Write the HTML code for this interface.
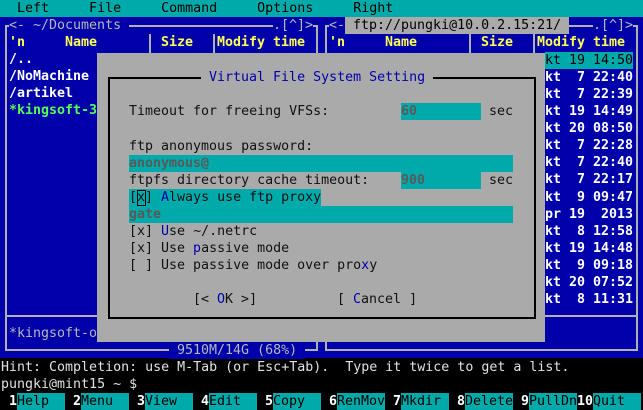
<!DOCTYPE html>
<html><head><meta charset="utf-8"><style>
html,body{margin:0;width:643px;height:410px;overflow:hidden}
body{background:#000;position:relative;font-family:"DejaVu Sans Mono","Liberation Mono",monospace;font-size:13.3px}
div{position:absolute}
.t{white-space:pre;height:17px;line-height:17px}
.b{font-weight:bold}
.bg{background:#0000aa}
.hl{background:#00aaaa}
.ln{background:#b0b0b0}
.y{color:#ffff55}
.w{color:#fff}
.g{color:#b8b8b8}
.bl{color:#0000aa}
.dim{color:#5a5a5a;font-weight:bold}
.fk{color:#000;background:#00aaaa;width:48px}
</style></head><body>
<!-- menu -->
<div style="left:0;top:0;width:643px;height:17px;background:#00aaaa"></div>
<div class="t" style="left:1px;top:0;color:#000">  Left     File     Command     Options     Right</div>
<!-- panels bg -->
<div class="bg" style="left:0;top:17px;width:643px;height:341px"></div>
<!-- left panel frame -->
<div class="ln" style="left:5px;top:25px;width:2px;height:326px"></div>
<div class="ln" style="left:5px;top:25px;width:312px;height:2px"></div>
<div class="ln" style="left:316px;top:25px;width:2px;height:326px"></div>
<div class="ln" style="left:5px;top:349px;width:312px;height:2px"></div>
<div class="ln" style="left:5px;top:315px;width:312px;height:2px"></div>
<div class="ln" style="left:149px;top:34px;width:2px;height:273px"></div>
<div class="ln" style="left:213px;top:34px;width:2px;height:273px"></div>
<!-- right panel frame -->
<div class="ln" style="left:325px;top:25px;width:2px;height:326px"></div>
<div class="ln" style="left:325px;top:25px;width:312px;height:2px"></div>
<div class="ln" style="left:636px;top:25px;width:2px;height:326px"></div>
<div class="ln" style="left:325px;top:349px;width:312px;height:2px"></div>
<div class="ln" style="left:325px;top:315px;width:312px;height:2px"></div>
<div class="ln" style="left:469px;top:34px;width:2px;height:273px"></div>
<div class="ln" style="left:533px;top:34px;width:2px;height:273px"></div>
<!-- titles -->
<div class="t g bg" style="left:9px;top:17px">&lt;- ~/Documents </div>
<div class="t g bg" style="left:273px;top:17px">.[^]&gt;</div>
<div class="t g bg" style="left:329px;top:17px">&lt;-</div>
<div class="t" style="left:345px;top:17px;background:#aaaaaa;color:#000"> ftp://pungki@10.0.2.15:21/ </div>
<div class="t g bg" style="left:593px;top:17px">.[^]&gt;</div>
<!-- headers -->
<div class="t b y" style="left:9px;top:34px">'n</div>
<div class="t b y" style="left:65px;top:34px">Name</div>
<div class="t b y" style="left:161px;top:34px">Size</div>
<div class="t b y bg" style="left:217px;top:34px">Modify time</div>
<div class="t b y" style="left:329px;top:34px">'n</div>
<div class="t b y" style="left:385px;top:34px">Name</div>
<div class="t b y" style="left:481px;top:34px">Size</div>
<div class="t b y bg" style="left:537px;top:34px">Modify time</div>
<!-- left files -->
<div class="t b w" style="left:9px;top:51px">/..</div>
<div class="t b w" style="left:9px;top:68px">/NoMachine</div>
<div class="t b w" style="left:9px;top:85px">/artikel</div>
<div class="t b" style="left:9px;top:102px;color:#55ff55">*kingsoft-3</div>
<div class="t g" style="left:9px;top:325px">*kingsoft-o</div>
<div class="t g bg" style="left:169px;top:342px"> 9510M/14G (68%) </div>
<!-- right dates -->
<div class="t hl" style="left:545px;top:52px;width:88px;color:#000">kt 19 14:50</div>
<div class="t b w" style="left:545px;top:69px;height:240px;line-height:17.08px">kt  7 22:40
kt  7 22:39
kt 19 14:49
kt 20 08:50
kt  7 22:28
kt  7 22:40
kt  7 22:17
kt  9 09:47
pr 19  2013
kt  8 12:58
kt 19 14:48
kt  9 09:18
kt 20 07:52
kt  8 11:31</div>
<!-- dialog -->
<div style="left:97px;top:53px;width:448px;height:289px;background:#aaaaaa"></div>
<div style="left:108px;top:77px;width:424px;height:238px;border:2px solid #000"></div>
<div class="t bl" style="left:201px;top:69px;background:#aaaaaa"> Virtual File System Setting </div>
<div class="t" style="left:129px;top:103px;color:#111">Timeout for freeing VFSs:</div>
<div class="t hl dim" style="left:401px;top:103px;width:80px">60</div>
<div class="t" style="left:489px;top:103px;color:#111">sec</div>
<div class="t" style="left:129px;top:138px;color:#111">ftp anonymous password:</div>
<div class="t hl dim" style="left:129px;top:155px;width:384px">anonymous@</div>
<div class="t" style="left:129px;top:172px;color:#111">ftpfs directory cache timeout:</div>
<div class="t hl dim" style="left:401px;top:172px;width:80px">900</div>
<div class="t" style="left:489px;top:172px;color:#111">sec</div>
<div class="t hl" style="left:129px;top:189px;width:192px;color:#111">[x] <span class="bl">A</span>lways use ftp proxy</div>
<div style="left:137px;top:190px;width:7px;height:14px;border:1px solid #000"></div>
<div class="t hl dim" style="left:129px;top:206px;width:384px">gate</div>
<div class="t" style="left:129px;top:223px;color:#111">[x] <span class="bl">U</span>se ~/.netrc</div>
<div class="t" style="left:129px;top:240px;color:#111">[x] Use <span class="bl">p</span>assive mode</div>
<div class="t" style="left:129px;top:257px;color:#111">[ ] Use passive mode over pro<span class="bl">x</span>y</div>
<div class="t" style="left:193px;top:291px;color:#111">[&lt; <span class="bl">O</span>K &gt;]</div>
<div class="t" style="left:337px;top:291px;color:#111">[ <span class="bl">C</span>ancel ]</div>
<!-- hint & prompt -->
<div class="t" style="left:1px;top:359px;color:#e0e0e0">Hint: Completion: use M-Tab (or Esc+Tab).  Type it twice to get a list.</div>
<div class="t" style="left:1px;top:376px;color:#e0e0e0">pungki@mint15 ~ $</div>
<!-- fkeys -->
<div class="t w b" style="left:9px;top:393px">1</div><div class="t fk" style="left:17px;top:393px">Help</div>
<div class="t w b" style="left:73px;top:393px">2</div><div class="t fk" style="left:81px;top:393px">Menu</div>
<div class="t w b" style="left:137px;top:393px">3</div><div class="t fk" style="left:145px;top:393px">View</div>
<div class="t w b" style="left:201px;top:393px">4</div><div class="t fk" style="left:209px;top:393px">Edit</div>
<div class="t w b" style="left:265px;top:393px">5</div><div class="t fk" style="left:273px;top:393px">Copy</div>
<div class="t w b" style="left:329px;top:393px">6</div><div class="t fk" style="left:337px;top:393px">RenMov</div>
<div class="t w b" style="left:393px;top:393px">7</div><div class="t fk" style="left:401px;top:393px">Mkdir</div>
<div class="t w b" style="left:457px;top:393px">8</div><div class="t fk" style="left:465px;top:393px">Delete</div>
<div class="t w b" style="left:521px;top:393px">9</div><div class="t fk" style="left:529px;top:393px">PullDn</div>
<div class="t w b" style="left:577px;top:393px">10</div><div class="t fk" style="left:593px;top:393px">Quit</div>
</body></html>
